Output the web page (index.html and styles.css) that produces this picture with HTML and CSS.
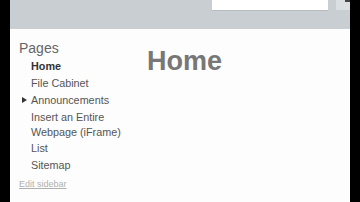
FILE: index.html
```html
<!DOCTYPE html>
<html>
<head>
<meta charset="UTF-8">
<title>Home</title>
<link rel="stylesheet" href="styles.css">
</head>
<body>
    <div class="page">
        <div class="header">
            <div class="search-box"></div>
            <div class="search-btn"><span class="btn-mark"></span></div>
        </div>
        <div class="main">
            <div class="sidebar">
                <h2 class="sidebar-title">Pages</h2>
                <ul class="nav">
                    <li class="current">Home</li>
                    <li>File Cabinet</li>
                    <li class="has-children"><span class="arrow"></span>Announcements</li>
                    <li>Insert an Entire Webpage (iFrame)</li>
                    <li>List</li>
                    <li>Sitemap</li>
                </ul>
                <a class="edit-link" href="#">Edit sidebar</a>
            </div>
            <div class="content">
                <h1 class="page-title">Home</h1>
            </div>
        </div>
    </div>
</body>
</html>
```

FILE: styles.css
```css
* { padding: 0; margin: 0; }
html, body {
    width: 100%;
    height: 100%;
}
body {
    background: #000;
    overflow: hidden;
    font-family: "Liberation Sans", Arial, sans-serif;
}
.page {
    margin-left: 10px;
    width: 340px;
    height: 202px;
    background: #fdfdfd;
}
.header {
    height: 29px;
    background: #c9ced3;
    display: flex;
    align-items: flex-start;
}
.search-box {
    margin-left: 202px;
    width: 116px;
    height: 10px;
    background: #fff;
    border-bottom: 1px solid #b8bcc0;
}
.search-btn {
    position: relative;
    margin-left: 8px;
    width: 14px;
    height: 10px;
    background: #dcdfe2;
}
.btn-mark {
    position: absolute;
    right: 0;
    top: 0;
    width: 5px;
    height: 2px;
    background: #444;
}
.main {
    display: flex;
}
.sidebar {
    width: 128px;
    padding: 11px 0 0 9px;
}
.sidebar-title {
    font-size: 14px;
    font-weight: normal;
    color: #666;
    line-height: 16px;
}
.nav {
    list-style: none;
    margin-top: 2px;
}
.nav li {
    position: relative;
    padding-left: 12px;
    font-size: 10.8px;
    line-height: 17px;
    color: #555;
    width: 95px;
}
.nav li.current {
    font-weight: bold;
    color: #333;
}
.nav li:nth-child(4) {
    line-height: 15px;
    margin-top: 1px;
}
.arrow {
    position: absolute;
    left: 3px;
    top: 5px;
    border-left: 5px solid #333;
    border-top: 3.5px solid transparent;
    border-bottom: 3.5px solid transparent;
}
.edit-link {
    display: block;
    margin-top: 5px;
    font-size: 9px;
    color: #b0b0b0;
}
.content {
    padding: 17px 0 0 0;
}
.page-title {
    font-size: 27px;
    font-weight: bold;
    color: #777;
}
```
